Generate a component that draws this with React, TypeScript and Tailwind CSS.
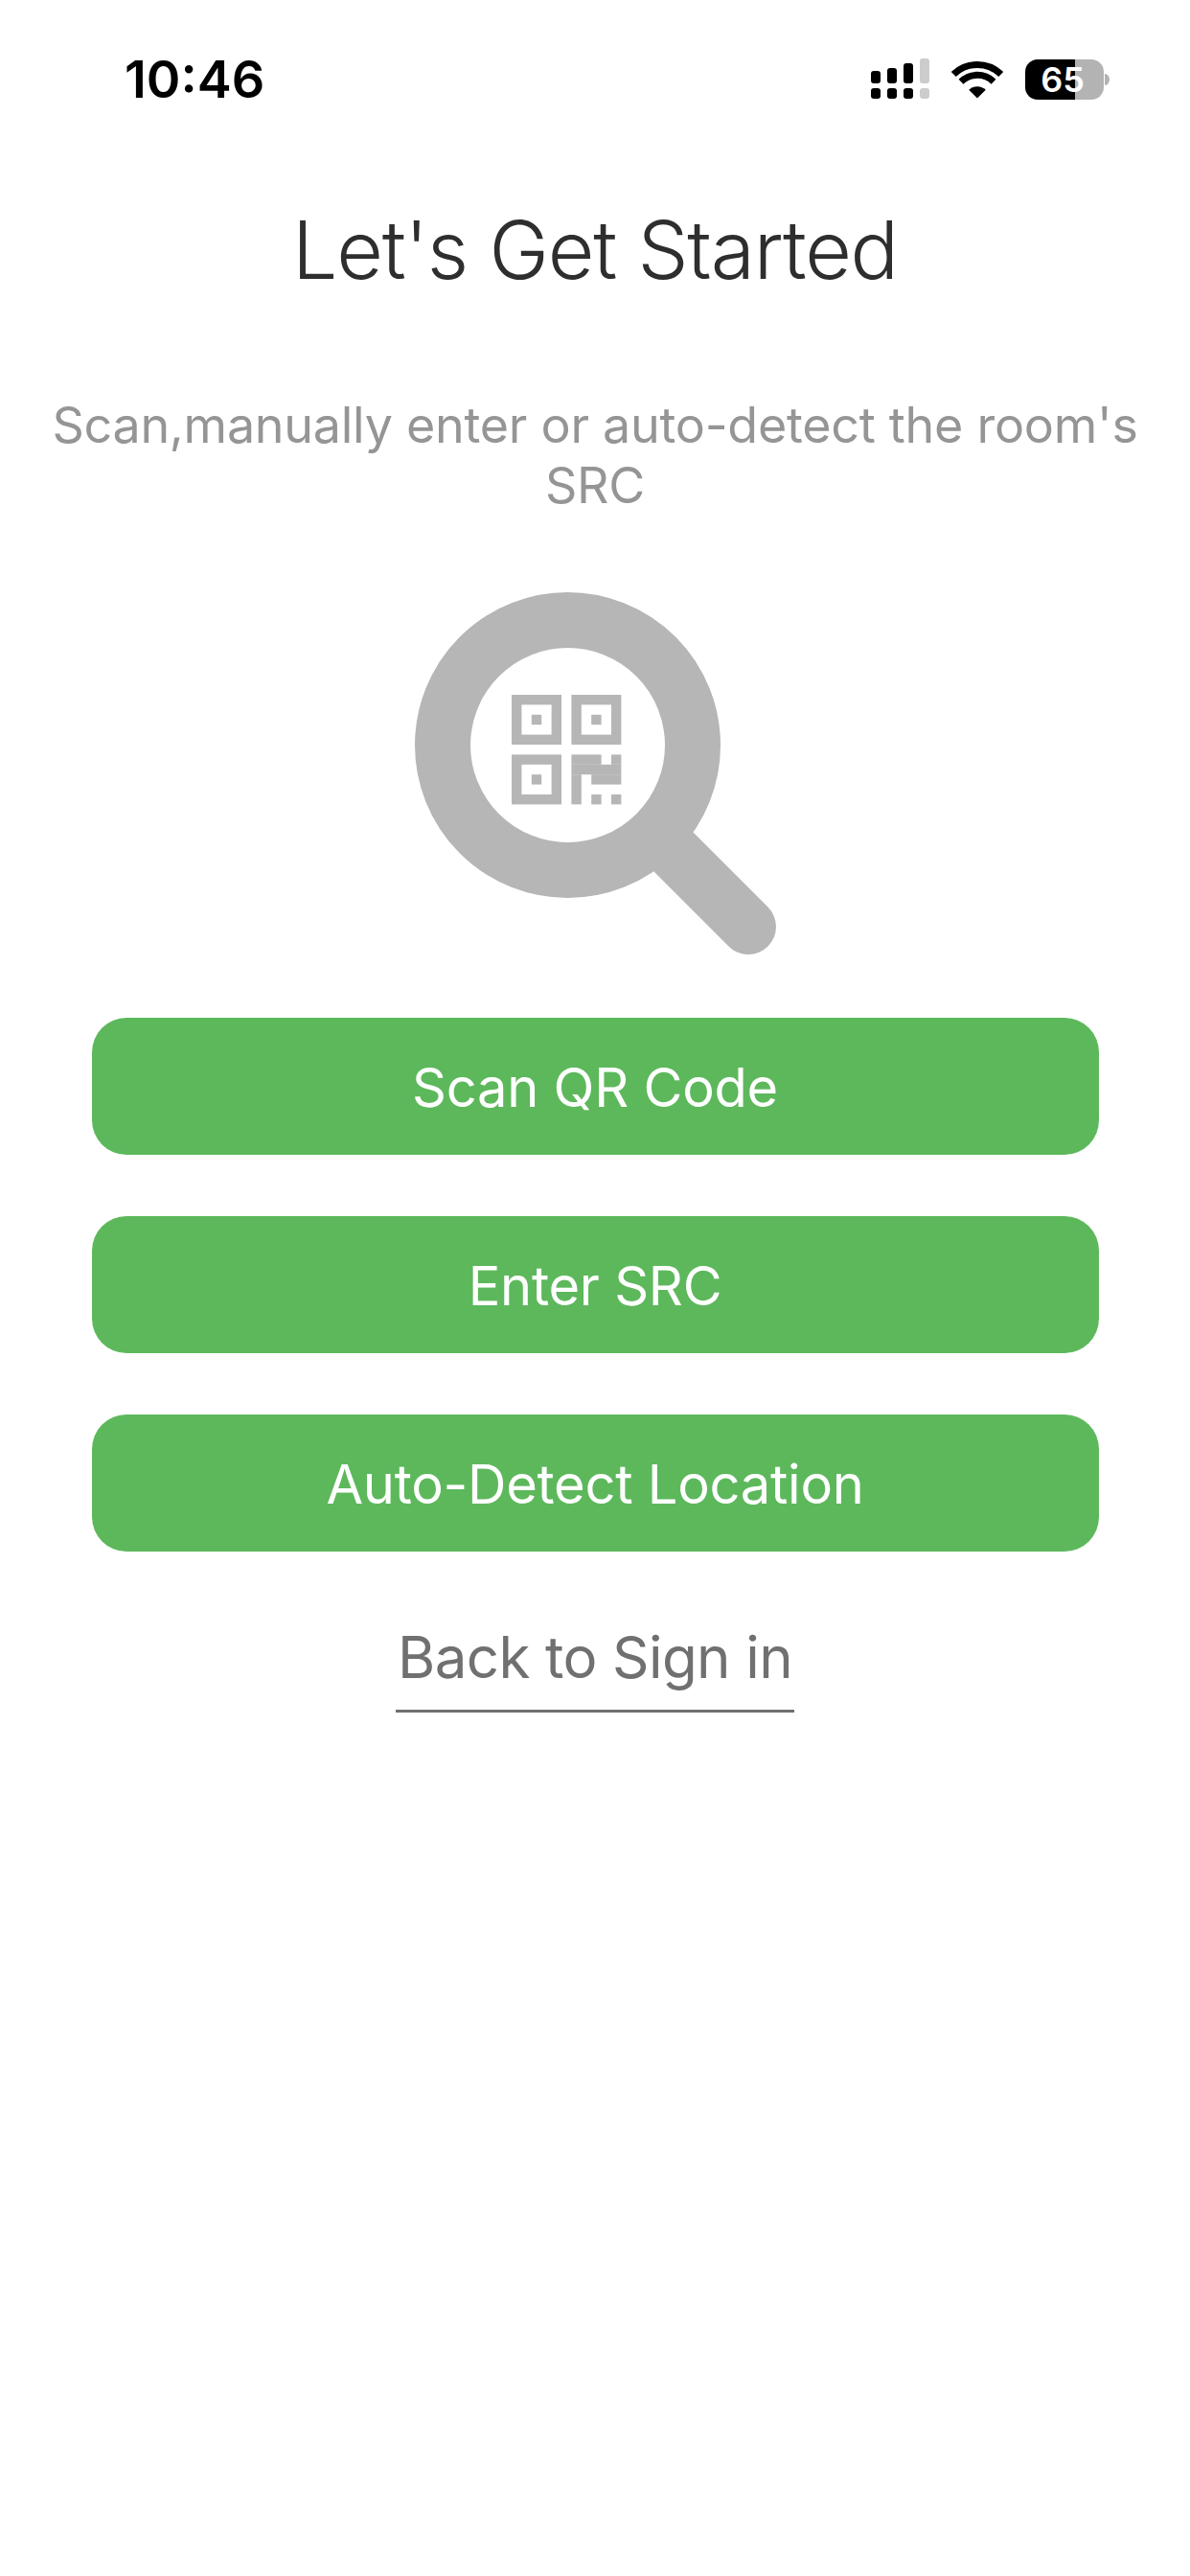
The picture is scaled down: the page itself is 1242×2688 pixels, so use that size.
const FONT = "font-['Inter','Noto_Sans',sans-serif]";

function SignalIcon() {
  return (
    <svg width="61" height="43" viewBox="0 0 61 43">
      <rect x="0" y="13" width="10" height="13" rx="3" fill="#000" />
      <rect x="17" y="10" width="10" height="16" rx="3" fill="#000" />
      <rect x="34" y="5" width="10" height="21" rx="3" fill="#000" />
      <rect x="51" y="0" width="10" height="26" rx="3" fill="#ccc" />
      <rect x="0" y="31" width="10" height="11" rx="3" fill="#000" />
      <rect x="17" y="31" width="10" height="11" rx="3" fill="#000" />
      <rect x="34" y="31" width="10" height="11" rx="3" fill="#000" />
      <rect x="51" y="31" width="10" height="11" rx="3" fill="#ccc" />
    </svg>
  );
}

function WifiIcon() {
  return (
    <svg width="54" height="40" viewBox="0 0 54 40">
      <path d="M2.3 14.5A35.5 35.5 0 0 1 51.7 14.5" fill="none" stroke="#000" strokeWidth="7" />
      <path d="M10 22.2A24.5 24.5 0 0 1 44 22.2" fill="none" stroke="#000" strokeWidth="7" />
      <path d="M27 39.5L18.2 30.8A12.5 12.5 0 0 1 35.8 30.8Z" fill="#000" />
    </svg>
  );
}

function BatteryIcon() {
  return (
    <div className="flex items-center">
      <div className="w-[82px] h-[42px] pr-[4px] rounded-[13px] bg-[linear-gradient(90deg,#000_63.5%,#b3b3b3_63.5%)] flex items-center justify-center">
        <span className="text-[36px] leading-none font-semibold text-white">65</span>
      </div>
      <svg width="5" height="12" viewBox="0 0 5 12" className="ml-px">
        <path d="M0 0A5 6 0 0 1 0 12Z" fill="#b3b3b3" />
      </svg>
    </div>
  );
}

function SearchQrIcon() {
  const c = '#b6b6b6';
  const m = 10.4;
  // filled modules of the lower right block, col/row on the 11 module grid
  const cells: [number, number, number, number][] = [
    [6, 6, 3, 1],
    [10, 6, 1, 1],
    [6, 7, 5, 1],
    [6, 8, 1, 3],
    [8, 8, 3, 1],
    [8, 10, 1, 1],
    [10, 10, 1, 1],
  ];
  const finders = [
    [0, 0],
    [6, 0],
    [0, 6],
  ];
  return (
    <svg width="420" height="410" viewBox="0 0 420 410" className="mt-[62px]">
      <circle cx="181.5" cy="177.5" r="130.5" fill="none" stroke={c} strokeWidth="58" />
      <path d="M280 277L370 367" stroke={c} strokeWidth="58" strokeLinecap="round" />
      <g transform="translate(123 125)">
        {finders.map(([x, y]) => (
          <g key={`${x}-${y}`}>
            <rect x={x * m + m / 2} y={y * m + m / 2} width={m * 4} height={m * 4} fill="none" stroke={c} strokeWidth={m} />
            <rect x={(x + 2) * m} y={(y + 2) * m} width={m} height={m} fill={c} />
          </g>
        ))}
        {cells.map(([x, y, w, h]) => (
          <rect key={`${x}-${y}`} x={x * m} y={y * m} width={w * m} height={h * m} fill={c} />
        ))}
      </g>
    </svg>
  );
}

function ActionButton({ label }: { label: string }) {
  return (
    <button className="w-[1051px] h-[143px] pt-[2px] rounded-[36px] bg-[#5db85c] text-white text-[56px] tracking-[-0.25px] flex items-center justify-center">
      {label}
    </button>
  );
}

export default function App() {
  return (
    <div className={`${FONT} min-h-[2688px] bg-white flex flex-col items-center`}>
      <div className="w-full h-[165px] pl-[130px] pr-[84px] flex items-center justify-between">
        <span className="text-[54px] leading-none font-semibold text-black">10:46</span>
        <div className="flex items-center gap-[23px]">
          <SignalIcon />
          <WifiIcon />
          <BatteryIcon />
        </div>
      </div>

      <h1 className="mt-[49px] text-[84px] leading-[94px] font-light tracking-[-1.2px] text-[#2e2e2e]">Let's Get Started</h1>

      <p className="mt-[104px] w-[1180px] text-center text-[52px] leading-[63px] tracking-[-0.26px] text-[#959595]">
        Scan,manually enter or auto-detect the room's SRC
      </p>

      <SearchQrIcon />

      <div className="mt-[52px] flex flex-col gap-[64px]">
        <ActionButton label="Scan QR Code" />
        <ActionButton label="Enter SRC" />
        <ActionButton label="Auto-Detect Location" />
      </div>

      <a className="mt-[73px] px-[2px] pb-[17px] border-b-[3px] border-[#707070] text-[60px] leading-[75px] tracking-[-0.6px] text-[#707070]">
        Back to Sign in
      </a>
    </div>
  );
}
